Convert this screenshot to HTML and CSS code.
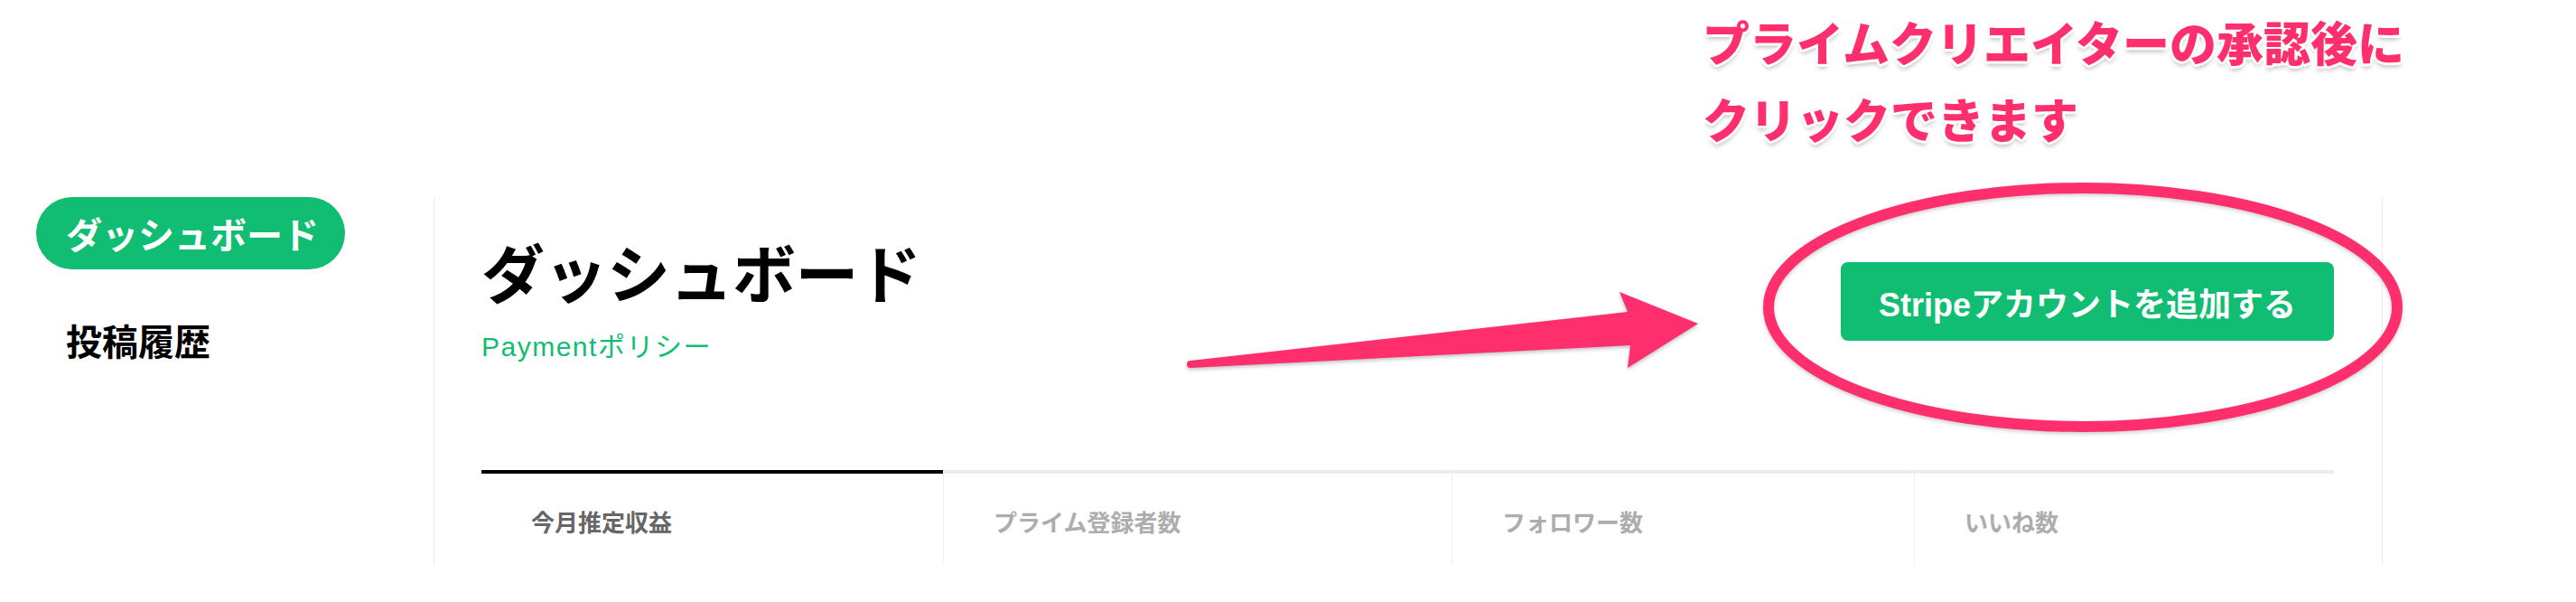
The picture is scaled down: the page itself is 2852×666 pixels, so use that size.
FILE: index.html
```html
<!DOCTYPE html>
<html lang="ja">
<head>
<meta charset="utf-8">
<title>ダッシュボード</title>
<link rel="stylesheet" href="styles.css">
</head>
<body>
<div class="layout">
  <aside class="sidebar">
    <nav class="nav">
      <a class="nav-item is-active">ダッシュボード</a>
      <a class="nav-item">投稿履歴</a>
    </nav>
  </aside>
  <main class="main">
    <header class="header">
      <div class="title-block">
        <h1 class="title">ダッシュボード</h1>
        <a class="policy-link">Paymentポリシー</a>
      </div>
      <button class="stripe-btn">Stripeアカウントを追加する</button>
    </header>
    <div class="tabs">
      <div class="tab is-active"><span class="tab-label">今月推定収益</span></div>
      <div class="tab"><span class="tab-label">プライム登録者数</span></div>
      <div class="tab"><span class="tab-label">フォロワー数</span></div>
      <div class="tab"><span class="tab-label">いいね数</span></div>
    </div>
  </main>
</div>

<div class="note">プライムクリエイターの承認後に<br>クリックできます</div>

<svg class="marks" width="2852" height="666" viewBox="0 0 2852 666" xmlns="http://www.w3.org/2000/svg">
  <path class="mark-arrow" d="M1318,399 L1802,345 L1793,323 L1880,358 L1802,407 L1805,382 L1318,407 A4,4 0 0 1 1318,399 Z"/>
  <ellipse class="mark-ellipse" cx="2306" cy="340" rx="348" ry="132"/>
</svg>
</body>
</html>
```
FILE: styles.css
```css
html, body {
  margin: 0;
  padding: 0;
  background: #ffffff;
}

body {
  width: 2852px;
  height: 666px;
  position: relative;
  overflow: hidden;
  font-family: "Liberation Sans", "Noto Sans CJK JP", sans-serif;
  color: #000;
}

.layout {
  display: flex;
  margin-top: 218px;
  height: 407px;
}

/* Sidebar */
.sidebar {
  width: 481px;
  box-sizing: border-box;
  padding-left: 40px;
  border-right: 1px solid #ececec;
}

.nav {
  display: flex;
  flex-direction: column;
  gap: 38px;
}

.nav-item {
  display: block;
  width: 342px;
  height: 80px;
  box-sizing: border-box;
  padding-left: 33px;
  border-radius: 40px;
  font-family: "Noto Sans CJK JP", sans-serif;
  font-weight: 700;
  font-size: 40px;
  line-height: 80px;
  color: #000;
  white-space: nowrap;
}

.nav-item.is-active {
  background: #10bd73;
  color: #fff;
}

/* Main */
.main {
  width: 2157px;
  box-sizing: border-box;
  padding: 0 53px 0 52px;
  border-right: 1px solid #ececec;
}

.header {
  display: flex;
  justify-content: space-between;
  align-items: flex-start;
}

.title-block {
  display: flex;
  flex-direction: column;
  align-items: flex-start;
}

.title {
  margin: 47px 0 0 0;
  font-family: "Noto Sans CJK JP", sans-serif;
  font-weight: 700;
  font-size: 70px;
  line-height: 70px;
  letter-spacing: -0.5px;
  color: #000;
}

.policy-link {
  margin-top: 29px;
  font-size: 30px;
  line-height: 40px;
  letter-spacing: 1.5px;
  color: #10bd73;
}

.stripe-btn {
  margin-top: 72px;
  width: 546px;
  height: 87px;
  border: 0;
  border-radius: 8px;
  background: #10bd73;
  color: #fff;
  font-family: "Liberation Sans", "Noto Sans CJK JP", sans-serif;
  font-weight: 700;
  font-size: 36px;
  padding: 0;
}

/* Tabs */
.tabs {
  margin-top: 116px;
  display: grid;
  grid-template-columns: 511px 563px 512px 1fr;
}

.tab {
  height: 105px;
  box-sizing: border-box;
  border-top: 4px solid #ececec;
  border-left: 1px solid #efefef;
  padding: 40px 0 0 55px;
}

.tab.is-active {
  border-top-color: #000;
  border-left: 0;
}

.tab-label {
  display: block;
  font-family: "Noto Sans CJK JP", sans-serif;
  font-weight: 700;
  font-size: 26px;
  line-height: 26px;
  color: #adadad;
  white-space: nowrap;
}

.tab.is-active .tab-label {
  color: #666;
}

/* Annotation overlay */
.note {
  position: absolute;
  left: 1885px;
  top: 3px;
  font-family: "Noto Sans CJK JP", sans-serif;
  font-weight: 900;
  font-size: 52px;
  line-height: 85px;
  color: #ff2e6c;
  white-space: nowrap;
  letter-spacing: 0;
  text-shadow:
    3px 0 0 #fff, -3px 0 0 #fff, 0 3px 0 #fff, 0 -3px 0 #fff,
    2px 2px 0 #fff, -2px 2px 0 #fff, 2px -2px 0 #fff, -2px -2px 0 #fff,
    0 5px 5px rgba(0, 0, 0, 0.25);
}

.marks {
  position: absolute;
  left: 0;
  top: 0;
  pointer-events: none;
}

.mark-arrow {
  fill: #ff2e6c;
  filter: drop-shadow(0 2px 2px rgba(0, 0, 0, 0.25));
}

.mark-ellipse {
  fill: none;
  stroke: #ff2e6c;
  stroke-width: 12;
  filter: drop-shadow(0 2px 2px rgba(0, 0, 0, 0.2));
}
```
